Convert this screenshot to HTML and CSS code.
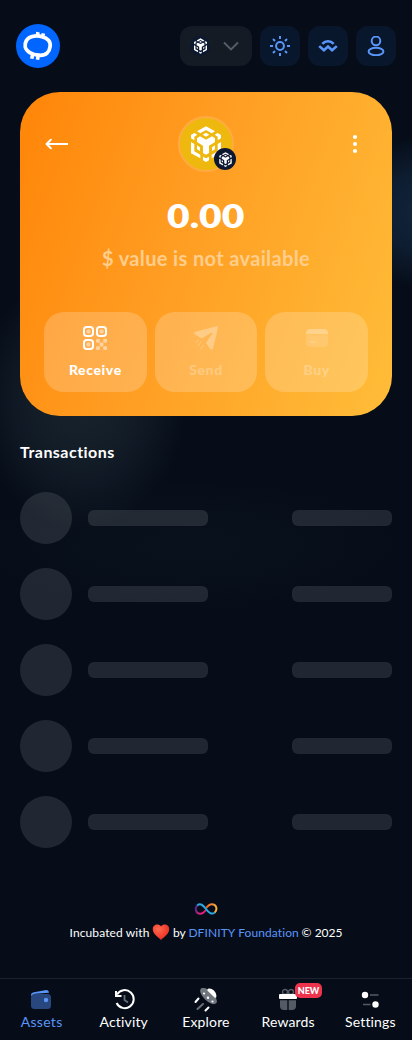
FILE: index.html
```html
<!DOCTYPE html>
<html lang="en">
<head>
<meta charset="utf-8">
<meta name="viewport" content="width=device-width, initial-scale=1">
<title>Wallet</title>
<link rel="stylesheet" href="styles.css">
</head>
<body>
<svg class="defs" aria-hidden="true">
  <symbol id="bnb" viewBox="0 0 90 108">
    <path fill="currentColor" d="M45 1 72 16 62 22 45 12 28 22 18 16ZM45 20 55 26 45 32 35 26ZM10 21 19 26 10 32V43L0 37V27ZM80 21 71 26 80 32V43L90 37V27ZM27 31 45 41 63 31 72 37V48L54 59V81L45 86 36 81V59L18 48V37ZM0 48 10 54V76L28 86V97L0 82ZM90 48 80 54V76L62 86V97L90 82ZM18 58 27 64V75L18 70ZM72 58 63 64V75L72 70ZM36 92 45 97 54 92V103L45 108 36 103Z"/>
  </symbol>
</svg>
<div class="app">
  <header class="header">
    <svg class="logo" viewBox="0 0 44 44"><circle cx="22" cy="22" r="22" fill="#0066ff"/><path d="M18 12.200C23 11.300 29.500 13 32.500 16.200C35.200 19.200 34.500 26 31 29.200C27.500 32.400 19 31.700 13.800 28.600C8.500 25.500 8.200 20.500 10.300 16.800C12 13.900 14.500 12.700 18 12.200Z" fill="none" stroke="#fff" stroke-width="3.800"/><path d="m21.300 12 .7-3.900M26.600 13.200l.8-3.900M16.500 30.800l-.7 4M22.200 31.800l-.7 3.900" stroke="#fff" stroke-width="3.600"/></svg>
    <div class="tools">
      <div class="network"><span class="network-badge"><svg width="13" height="16"><use href="#bnb"/></svg></span><svg width="16" height="10" viewBox="0 0 16 10" fill="none" stroke="#565d68" stroke-width="1.900"><path d="m1 1.500 7 7 7-7"/></svg></div>
      <div class="tool"><svg width="20" height="20" viewBox="0 0 20 20" fill="none" stroke="#5a95fa" stroke-width="2"><circle cx="10" cy="10" r="3.900"/><path d="M10 0v3M10 17v3M0 10h3M17 10h3M3 3l2 2M15 15l2 2M3 17l2-2M15 5l2-2"/></svg></div>
      <div class="tool"><svg width="20" height="20" viewBox="0 0 20 20" fill="none" stroke="#5a95fa" stroke-width="2.600"><path d="M4.300 7.900C7.500 4.300 12.500 4.300 15.700 7.900M1.200 10.100 5.900 14.300 10 10.500 14.100 14.300 18.800 10.100"/></svg></div>
      <div class="tool"><svg width="20" height="20" viewBox="0 0 20 20" fill="none" stroke="#5a95fa" stroke-width="2"><circle cx="10" cy="4.900" r="4.300"/><ellipse cx="10" cy="15.500" rx="7.400" ry="3.800"/></svg></div>
    </div>
  </header>

  <main>
    <section class="card">
      <div class="card-top">
        <svg width="24" height="24" viewBox="0 0 24 24" fill="none" stroke="#fff" stroke-width="2" stroke-linecap="round" stroke-linejoin="round"><path d="M23.500 12H3M6.800 7.800 2.600 12l4.200 4.200"/></svg>
        <div class="token"><svg width="30" height="36"><use href="#bnb"/></svg><span class="token-net"><svg width="13" height="15"><use href="#bnb"/></svg></span></div>
        <svg width="24" height="24" viewBox="0 0 24 24" fill="#fff"><circle cx="11" cy="5" r="2.100"/><circle cx="11" cy="12" r="2.100"/><circle cx="11" cy="19" r="2.100"/></svg>
      </div>
      <div class="balance"><span>0.00</span></div>
      <div class="fiat">$ value is not available</div>
      <div class="actions">
        <div class="action receive">
          <svg width="24" height="24" viewBox="0 0 24 24"><g fill="none" stroke="#fff" stroke-width="2"><rect x="1" y="1" width="9" height="9" rx="2.800"/><rect x="14" y="1" width="9" height="9" rx="2.800"/><rect x="1" y="14" width="9" height="9" rx="2.800"/></g><g fill="#fff" opacity=".48"><circle cx="5.500" cy="5.500" r="2.200"/><circle cx="18.500" cy="5.500" r="2.200"/><circle cx="5.500" cy="18.500" r="2.200"/><rect x="13" y="13" width="3.800" height="3.800" rx="1"/><rect x="20.200" y="13" width="3.800" height="3.800" rx="1"/><rect x="16.600" y="16.600" width="3.800" height="3.800" rx="1"/><rect x="13" y="20.200" width="3.800" height="3.800" rx="1"/><rect x="20.200" y="20.200" width="3.800" height="3.800" rx="1"/></g></svg>
          <span>Receive</span>
        </div>
        <div class="action off send">
          <svg width="24" height="24" viewBox="0 0 24 24"><path fill="#fff" d="M22.500.2Q24.300 0 23.900 2L19 22.500Q18 25 16 22.800L12 16.800 18.500 7.500Q18.400 6.300 17.200 6.700L7.600 12.500 1 8.500Q-.8 6.800 1.400 5.700Z"/><path d="m4.500 14-3 2.500M7.500 15.500 4 19.500M9.500 19.500l-3 3.500" fill="none" stroke="#fff" stroke-width="1.300" stroke-linecap="round" opacity=".5"/></svg>
          <span>Send</span>
        </div>
        <div class="action off buy">
          <svg width="24" height="24" viewBox="0 0 24 24"><path fill="#fff" d="M1 7.500Q1 3 5.500 3h13Q23 3 23 7.500V8.200H1Z"/><path fill="#fff" opacity=".42" d="M1 9.200h22V16q0 5-5 5H6q-5 0-5-5Z"/><path d="M6 16h4" stroke="#fff" stroke-width="1.300" stroke-linecap="round"/></svg>
          <span>Buy</span>
        </div>
      </div>
    </section>

    <h2>Transactions</h2>
    <div class="rows">
      <div class="row"><i class="avatar"></i><i class="name"></i><i class="amount"></i></div>
      <div class="row"><i class="avatar"></i><i class="name"></i><i class="amount"></i></div>
      <div class="row"><i class="avatar"></i><i class="name"></i><i class="amount"></i></div>
      <div class="row"><i class="avatar"></i><i class="name"></i><i class="amount"></i></div>
      <div class="row"><i class="avatar"></i><i class="name"></i><i class="amount"></i></div>
    </div>
  </main>

  <footer class="credit">
    <svg width="24" height="12" viewBox="0 0 24 12" fill="none" stroke-width="2"><defs><linearGradient id="pink" x1="0" x2="1" y1="0" y2="1"><stop offset=".2" stop-color="#522785"/><stop offset=".8" stop-color="#ed1e79"/></linearGradient><linearGradient id="gold"><stop stop-color="#f15a24"/><stop offset="1" stop-color="#fbb03b"/></linearGradient></defs><path stroke="url(#pink)" d="M3.500 2.200C.5 5 1.500 10.800 6.200 10.800Q9 10.800 12 7"/><path stroke="url(#gold)" d="M12 5.200Q15 1.200 17.800 1.200C22.500 1.200 23.800 6.500 20.700 9.600"/><path stroke="#29abe2" d="M3.300 2.500C6.200-.2 9.200 2 12 6S17.800 12 20.800 9.500"/></svg>
    <p><span class="inc">Incubated with</span><svg class="heart" width="18" height="17" viewBox="0 0 18 17"><defs><radialGradient id="red" cx=".35" cy=".3" r=".8"><stop stop-color="#ff6a50"/><stop offset=".6" stop-color="#f4402f"/><stop offset="1" stop-color="#cf2c25"/></radialGradient></defs><path fill="url(#red)" d="M9 2.400C6.800-.5.800-.2.800 5.300.8 10 6 13 9 16c3-3 8.200-6 8.200-10.700C17.200-.2 11.200-.5 9 2.400Z"/></svg><span class="by">by</span><a>DFINITY Foundation</a><span class="year">© 2025</span></p>
  </footer>

  <nav class="nav">
    <div class="tab active"><svg width="24" height="24" viewBox="0 0 24 24"><rect x="1" y="6" width="20" height="15" rx="3.500" fill="#28477e"/><path fill="#5a95fa" d="M1 8Q.5 5 4 4.200L15 2.200Q18.500 1.500 19 4.800L5 5.700Q2.500 5.900 1 8Z"/><circle cx="16" cy="12" r="2.200" fill="#5a95fa"/></svg><span>Assets</span></div>
    <div class="tab activity"><svg width="24" height="24" viewBox="0 0 24 24" fill="none"><path d="M5 6.500A9 9 0 1 1 4.600 15" stroke="#fff" stroke-width="2"/><path d="M4 3v5h5.500" stroke="#fff" stroke-width="2"/><path d="M12.500 7v5l3.500 2.500" stroke="#666c76" stroke-width="1.800"/></svg><span>Activity</span></div>
    <div class="tab explore"><svg width="24" height="24" viewBox="0 0 24 24"><ellipse cx="14.500" cy="8" rx="10.600" ry="4.900" transform="rotate(44 14.500 8)" fill="#70757d"/><path fill="#fff" d="M13.300 2.500C13.500-1.800 22.500 1.500 22.400 8.500Q22.300 10.500 20.500 9.500Z"/><g fill="#fff"><circle cx="10" cy="5.500" r="1.100"/><circle cx="14" cy="9.700" r="1.200"/><circle cx="18.500" cy="13.500" r="1.100"/></g><path d="m4.500 10.500-3 3.500M14.500 19.500 11.500 22.500" stroke="#fff" stroke-width="2" stroke-linecap="round"/><path d="m9 16-5.500 5" stroke="#6a7079" stroke-width="2" stroke-linecap="round"/></svg><span>Explore</span></div>
    <div class="tab rewards"><svg width="24" height="24" viewBox="0 0 24 24"><g fill="none" stroke="#555b65" stroke-width="1.400"><circle cx="9" cy="4" r="2.500"/><circle cx="15" cy="4" r="2.500"/></g><rect x="3" y="6" width="18" height="5" rx="1" fill="#fff"/><path fill="#555b65" d="M4 12.200h7.300V22H8q-4 0-4-4ZM12.700 12.200H20V18q0 4-4 4h-3.300Z"/></svg><em>NEW</em><span>Rewards</span></div>
    <div class="tab settings"><svg width="24" height="24" viewBox="0 0 24 24"><path d="M12 7h8.500M5 16.500h7.500" stroke="#555b65" stroke-width="1.600"/><circle cx="7" cy="7" r="3.200" fill="#fff"/><circle cx="17.500" cy="16.500" r="3.200" fill="#fff"/></svg><span>Settings</span></div>
  </nav>
</div>
</body>
</html>
```
FILE: styles.css
```css
* { box-sizing: border-box; }
body { margin: 0; background: #060d19; color: #fff; font-family: Lato, "Noto Sans", sans-serif; }
svg { display: block; flex: none; }
.defs { position: absolute; width: 0; height: 0; }
.app {
  width: 412px; height: 1040px; display: flex; flex-direction: column; overflow: hidden;
  background:
    radial-gradient(ellipse 75px 75px at 420px 212px, #11233b 0%, #0e1d31 50%, transparent 100%),
    radial-gradient(ellipse 105px 130px at 82px 400px, #17232c 0%, #121c27 50%, transparent 100%),
    radial-gradient(ellipse 210px 65px at 190px 545px, #09121c, transparent),
    #060d19;
}
.header { height: 92px; padding: 0 16px; display: flex; align-items: center; justify-content: space-between; }
.logo { width: 44px; height: 44px; }
.tools { display: flex; gap: 8px; }
.network { width: 72px; height: 40px; border-radius: 12px; background: #151b24; display: flex; align-items: center; justify-content: space-between; padding: 0 13px 0 10px; }
.network-badge { width: 20px; height: 20px; border-radius: 50%; background: #0b1830; display: grid; place-items: center; }
.tool { width: 40px; height: 40px; border-radius: 12px; background: #09172d; display: grid; place-items: center; }
.card { margin: 0 20px; height: 324px; border-radius: 40px; padding: 24px; background: linear-gradient(110deg, #ff8508 0%, #ff9f24 46%, #ffbd38 100%); }
.card-top { display: flex; justify-content: space-between; align-items: center; height: 56px; }
.token { position: relative; width: 56px; height: 56px; border-radius: 50%; border: 2px solid #ffaa43; background: #efb80e; display: grid; place-items: center; }
.token-net { position: absolute; left: 34px; top: 30px; width: 22px; height: 22px; border-radius: 50%; background: #0b1830; display: grid; place-items: center; }
.balance { height: 50px; margin-top: 19px; font-size: 32px; line-height: 50px; font-weight: 800; text-align: center; }
.balance span { display: inline-block; transform: scaleX(1.22); }
.fiat { height: 30px; margin-top: 2px; font-size: 20px; line-height: 30px; font-weight: 700; letter-spacing: .36px; text-align: center; color: #ffce8c; white-space: nowrap; }
.actions { display: grid; grid-template-columns: repeat(3, 1fr); gap: 8px; margin-top: 39px; }
.action { height: 80px; border-radius: 20px; background: rgba(255,255,255,.2); display: flex; flex-direction: column; align-items: center; padding-top: 14px; font-size: 14px; font-weight: 900; line-height: 20px; letter-spacing: .6px; }
.action span { margin-top: 10px; }
.off svg { opacity: .3; }
.off span { opacity: .25; }
h2 { margin: 23px 20px 28px; height: 25px; font-size: 16px; line-height: 25px; font-weight: 700; letter-spacing: .47px; }
.rows { margin: 0 20px; display: grid; gap: 24px; }
.row { display: flex; align-items: center; height: 52px; }
.row i { background: rgba(255,255,255,.11); }
.avatar { width: 52px; height: 52px; border-radius: 50%; margin-right: 16px; }
.name { width: 120px; height: 16px; border-radius: 6px; }
.amount { width: 100px; height: 16px; border-radius: 6px; margin-left: auto; }
.credit { margin-top: 55px; height: 75px; display: flex; flex-direction: column; align-items: center; }
.credit p { margin: 8px 0 0; width: 273px; height: 20px; display: flex; align-items: center; justify-content: space-between; font-size: 12px; line-height: 20px; white-space: nowrap; }
.heart { margin-top: -2px; }
.inc { letter-spacing: .11px; }
.credit a { color: #5a95fa; letter-spacing: .1px; }
.nav { height: 62px; border-top: 1px solid #1b222d; display: grid; grid-template-columns: repeat(5, 82.2px); padding: 9px 0 0 .5px; font-size: 14px; }
.tab { position: relative; display: flex; flex-direction: column; align-items: center; white-space: nowrap; }
.tab span { line-height: 20px; letter-spacing: .15px; }
.active { color: #5a95fa; }
.active span { letter-spacing: .3px; }
.tab em { position: absolute; left: 48px; top: -5px; width: 27px; height: 15px; border-radius: 5px; background: #ed344c; font: 900 9px/15px Lato, sans-serif; text-align: center; }
```
